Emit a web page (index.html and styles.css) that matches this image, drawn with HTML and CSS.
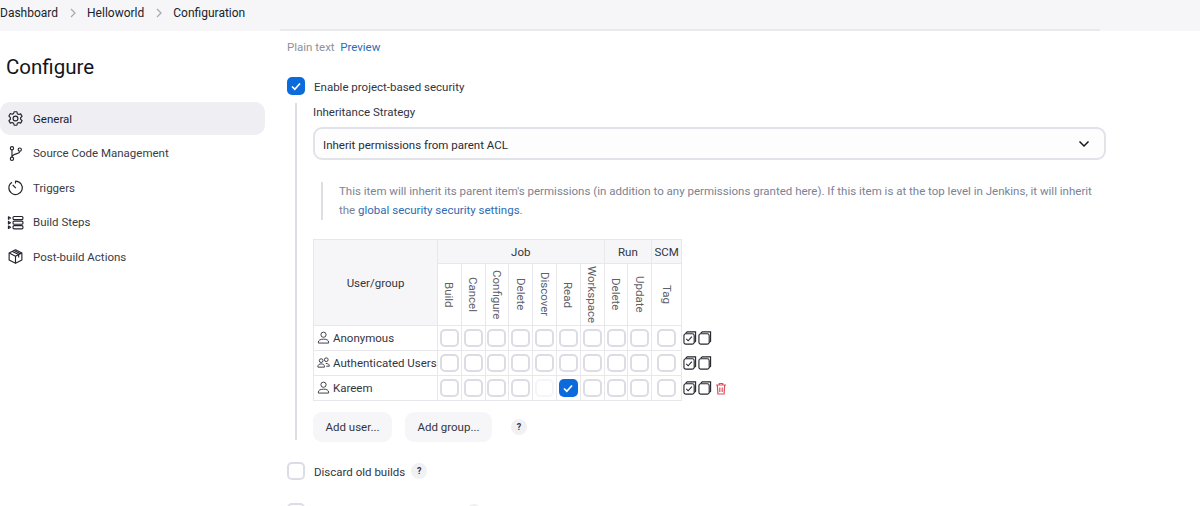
FILE: index.html
```html
<!DOCTYPE html>
<html lang="en">
  <head>
    <meta charset="UTF-8" />
    <title>Helloworld Config</title>
    <link rel="stylesheet" href="styles.css">
  </head>
  <body>
    <header class="crumbs">
      <span>Dashboard</span>
      <svg class="crumb-sep" viewBox="0 0 8 12"><path d="M2 2l4 4-4 4" /></svg>
      <span>Helloworld</span>
      <svg class="crumb-sep" viewBox="0 0 8 12"><path d="M2 2l4 4-4 4" /></svg>
      <span>Configuration</span>
    </header>

    <div class="page">
      <aside class="sidebar">
        <h1>Configure</h1>
        <nav class="side-nav">
          <a class="side-item active">
            <svg class="side-icon" viewBox="0 0 24 24"><path d="M10 2.500h4l.6 2.800 2 1.100 2.700-.9 2 3.500-2.100 1.900v2.200l2.100 1.900-2 3.500-2.700-.9-2 1.100-.6 2.800h-4l-.6-2.800-2-1.100-2.700.9-2-3.500 2.100-1.900v-2.200L2.700 8.500l2-3.500 2.700.9 2-1.100z" /><circle cx="12" cy="12" r="3.400" /></svg>
            General
          </a>
          <a class="side-item">
            <svg class="side-icon" viewBox="0 0 24 24"><circle cx="7" cy="4.500" r="2.300" /><circle cx="7" cy="19.500" r="2.300" /><circle cx="18" cy="6.500" r="2.300" /><path d="M7 7v10M18 9c0 4-11 3-11 8" /></svg>
            Source Code Management
          </a>
          <a class="side-item">
            <svg class="side-icon" viewBox="0 0 24 24"><path d="M7 4.500A9.500 9.500 0 1 0 12 3v3.500" /><path d="M8 8.500l4.500 4.500" /></svg>
            Triggers
          </a>
          <a class="side-item">
            <svg class="side-icon" viewBox="0 0 24 24"><path d="M2 4l3 1.800L2 7.500zM2 10.500l3 1.800-3 1.700zM2 17l3 1.800-3 1.700z" /><rect x="8.500" y="3.500" width="14" height="4.500" rx="1.500" /><rect x="8.500" y="10" width="14" height="4.500" rx="1.500" /><rect x="8.500" y="16.500" width="14" height="4.500" rx="1.500" /></svg>
            Build Steps
          </a>
          <a class="side-item">
            <svg class="side-icon" viewBox="0 0 24 24"><path d="M12 2.500l9 4.500v10l-9 4.500-9-4.500V7z" /><path d="M3 7l9 4.500L21 7M12 11.500v10M7.500 4.800l9 4.500v4M10 3.500l9 4.500" /></svg>
            Post-build Actions
          </a>
        </nav>
      </aside>

      <main class="content">
        <div class="desc-tabs">
          <span>Plain text</span>
          <a class="link">Preview</a>
        </div>

        <label class="check-row first">
          <span class="box checked"><svg viewBox="0 0 18 18"><path d="M5 9.500l2.800 2.700L13 6.500" /></svg></span>
          Enable project-based security
        </label>

        <section class="nested">
          <div class="field-label">Inheritance Strategy</div>
          <div class="select">
            Inherit permissions from parent ACL
            <svg viewBox="0 0 12 8"><path d="M1.500 1.500L6 6l4.500-4.500" /></svg>
          </div>

          <p class="note">
            This item will inherit its parent item's permissions (in addition to any permissions granted here). If this item is at the top level in Jenkins, it will inherit the <a class="link">global security security settings</a>.
          </p>

          <table class="matrix">
            <colgroup>
              <col class="col-user" />
              <col class="col-perm" span="9" />
              <col class="col-scm" />
              <col class="col-tools" />
            </colgroup>
            <thead>
              <tr class="head-groups">
                <th rowspan="2">User/group</th>
                <th colspan="7">Job</th>
                <th colspan="2">Run</th>
                <th>SCM</th>
              </tr>
              <tr class="head-perms">
                <th><span>Build</span></th>
                <th><span>Cancel</span></th>
                <th><span>Configure</span></th>
                <th><span>Delete</span></th>
                <th><span>Discover</span></th>
                <th><span>Read</span></th>
                <th><span>Workspace</span></th>
                <th><span>Delete</span></th>
                <th><span>Update</span></th>
                <th><span>Tag</span></th>
              </tr>
            </thead>
            <tbody id="matrix-rows"></tbody>
          </table>

          <div class="actions">
            <button class="btn add-user">Add user...</button>
            <button class="btn add-group">Add group...</button>
            <span class="help">?</span>
          </div>
        </section>

        <label class="check-row discard">
          <span class="box"></span>
          Discard old builds
          <span class="help small">?</span>
        </label>

        <div class="check-row cut">
          <span class="box"></span>
          <span class="help small far">?</span>
        </div>
      </main>
    </div>

    <script src="matrix.js"></script>
  </body>
</html>
```

FILE: matrix.js
```js
const rows = [
  { name: "Anonymous", group: false, checked: -1, remove: false },
  { name: "Authenticated Users", group: true, checked: -1, remove: false },
  { name: "Kareem", group: false, checked: 5, faint: 4, remove: true },
];

const userIcon = '<svg class="user-icon" viewBox="0 0 14 14"><circle cx="7" cy="4" r="2.800" /><path d="M1.500 13v-1c0-2 2-3.200 5.500-3.200s5.500 1.200 5.500 3.200v1z" /></svg>';
const groupIcon = '<svg class="user-icon" viewBox="0 0 14 14"><circle cx="4.500" cy="5" r="2" /><circle cx="10" cy="4" r="2" /><path d="M1 12v-1c0-1.500 1.500-2.500 3.500-2.500S8 9.500 8 11v1zM9.500 8c2.200 0 3.800 1 3.800 2.500V11H10" /></svg>';
const allIcon = '<svg class="bulk" viewBox="0 0 15 15"><path class="back" d="M3 3V2.500L4.500 1h9v10l-1.500 1.500" /><rect x="1" y="3" width="11" height="11" rx="2" /><path d="M3.500 8.500l2 2 4-4.500" /></svg>';
const noneIcon = '<svg class="bulk" viewBox="0 0 15 15"><path class="back" d="M3 3V2.500L4.500 1h9v10l-1.500 1.500" /><rect x="1" y="3" width="11" height="11" rx="2" /></svg>';
const trashIcon = '<svg class="trash" viewBox="0 0 12 13"><path d="M1 3h10M4.300 3V1.500h3.400V3M2.300 3l.6 9h6.200l.6-9M4.800 5.500v4.500M7.200 5.500v4.500" /></svg>';

const tbody = document.getElementById("matrix-rows");

rows.forEach((row) => {
  let cells = "";
  for (let i = 0; i < 10; i++) {
    let cls = "box";
    let mark = "";
    if (i === row.checked) {
      cls += " checked";
      mark = '<svg viewBox="0 0 18 18"><path d="M5 9.500l2.800 2.700L13 6.500" /></svg>';
    }
    if (i === row.faint) cls += " faint";
    cells += `<td><span class="${cls}">${mark}</span></td>`;
  }
  const tr = document.createElement("tr");
  tr.innerHTML =
    `<td class="user-cell">${row.group ? groupIcon : userIcon}${row.name}</td>` +
    cells +
    `<td class="row-tools">${allIcon}${noneIcon}${row.remove ? trashIcon : ""}</td>`;
  tbody.appendChild(tr);
});
```

FILE: styles.css
```css
* {
  box-sizing: border-box;
}
html,
body {
  margin: 0;
  height: 506px;
  overflow: hidden;
}
body {
  font-family: Roboto, "Noto Sans", sans-serif;
  font-size: 11.5px;
  color: #33353f;
  background-color: #fff;
}
.crumbs {
  height: 31px;
  padding-bottom: 6px;
  display: flex;
  align-items: center;
  gap: 10.5px;
  font-size: 12px;
  color: #20222b;
  background-color: #f6f6f8;
}
.crumb-sep {
  width: 8px;
  height: 12px;
  fill: none;
  stroke: #a6a8b1;
  stroke-width: 1.2;
}
.page {
  display: flex;
}
.sidebar {
  width: 287px;
  flex: none;
  padding-right: 22px;
}
.sidebar h1 {
  margin: 22px 0 21px 6px;
  font-size: 20.5px;
  line-height: 28px;
  font-weight: 400;
  color: #14151a;
}
.side-nav {
  display: flex;
  flex-direction: column;
  gap: 1.5px;
}
.side-item {
  height: 33px;
  display: flex;
  align-items: center;
  gap: 9px;
  padding-left: 7px;
  border-radius: 10px;
  color: #3a3c46;
}
.side-item.active {
  background-color: #eeeef3;
  color: #20222b;
}
.side-icon {
  width: 17px;
  height: 17px;
  fill: none;
  stroke: #23252e;
  stroke-width: 1.6;
  stroke-linejoin: round;
}
.content {
  flex: none;
  width: 820px;
  position: relative;
}
.content::before {
  content: "";
  position: absolute;
  top: -2px;
  left: -7px;
  width: 820px;
  height: 2px;
  background-color: #e9e9ee;
}
.desc-tabs {
  display: flex;
  gap: 5.5px;
  height: 18px;
  margin-top: 7px;
  line-height: 18px;
  color: #8d919e;
}
.link {
  color: #2b6cb5;
}
.check-row {
  display: flex;
  align-items: flex-start;
  gap: 9px;
  height: 18px;
  line-height: 20px;
  color: #33353f;
}
.check-row.first {
  margin-top: 21px;
}
.box {
  display: inline-block;
  width: 18px;
  height: 18px;
  flex: none;
  border: 2px solid #dcdde4;
  border-radius: 5px;
  background-color: #fff;
}
.box.checked {
  border: none;
  background-color: #0b6bdc;
}
.box.faint {
  border-color: #f5f5f7;
}
.box svg {
  display: block;
  width: 18px;
  height: 18px;
  fill: none;
  stroke: #fff;
  stroke-width: 1.7;
}
.nested {
  margin: 8px 0 0 8px;
  width: 812px;
  height: 337px;
  padding-left: 16px;
  border-left: 2px solid #dddee4;
}
.field-label {
  line-height: 18px;
  color: #33353f;
}
.select {
  width: 793px;
  height: 33px;
  margin-top: 6px;
  padding: 2px 14px 0 8px;
  display: flex;
  align-items: center;
  justify-content: space-between;
  border: 2px solid #e2e3e9;
  border-radius: 9px;
  background-color: #fdfdfe;
  color: #2a2c35;
}
.select svg {
  width: 12px;
  height: 8px;
  margin-top: -2px;
  fill: none;
  stroke: #15161c;
  stroke-width: 1.5;
}
.note {
  width: 775px;
  margin: 22px 0 0 8px;
  padding-left: 16px;
  border-left: 2px solid #dddee4;
  line-height: 19px;
  color: #7c8294;
}
.matrix {
  margin-top: 19px;
  width: 428px;
  table-layout: fixed;
  border-collapse: collapse;
}
.col-user {
  width: 124px;
}
.col-perm {
  width: 23.8px;
}
.col-scm {
  width: 30px;
}
.col-tools {
  width: 60px;
}
.matrix th,
.matrix td {
  border: 1px solid #e8e8ec;
  padding: 0;
  text-align: center;
  font-weight: 400;
}
.head-groups th {
  height: 24px;
  background-color: #f6f6f8;
  color: #33353f;
}
.head-perms th {
  height: 62px;
  color: #5e606a;
}
.head-perms span {
  display: block;
  width: fit-content;
  margin: 0 auto;
  writing-mode: vertical-rl;
  line-height: 14px;
}
.matrix td {
  height: 25px;
}
.matrix .box {
  display: block;
  width: 19px;
  margin: 0 auto;
}
.matrix td.user-cell {
  padding-left: 3px;
  text-align: left;
  white-space: nowrap;
  color: #33353f;
}
.user-icon {
  width: 13px;
  height: 13px;
  margin-right: 3px;
  vertical-align: -2px;
  fill: none;
  stroke: #33353f;
  stroke-width: 1;
}
.matrix td.row-tools {
  border: none;
  padding-left: 1px;
  text-align: left;
  white-space: nowrap;
}
.bulk {
  width: 14px;
  height: 14px;
  margin-right: 1px;
  vertical-align: middle;
  fill: #fff;
  stroke: #25262d;
  stroke-width: 1.2;
}
.bulk .back {
  fill: none;
}
.trash {
  width: 12px;
  height: 13px;
  margin-left: 2px;
  vertical-align: middle;
  fill: none;
  stroke: #dc4f60;
  stroke-width: 1.2;
}
.actions {
  margin-top: 11px;
  display: flex;
  align-items: center;
}
.btn {
  height: 30px;
  border: none;
  border-radius: 9px;
  background-color: #f6f6f8;
  color: #33353f;
  font: inherit;
  padding: 0;
}
.add-user {
  width: 79px;
}
.add-group {
  width: 87px;
  margin-left: 13px;
}
.help {
  width: 16px;
  height: 16px;
  margin-left: 19px;
  display: inline-flex;
  align-items: center;
  justify-content: center;
  border-radius: 50%;
  background-color: #f1f1f4;
  color: #33353f;
  font-size: 9px;
  font-weight: 700;
  line-height: 16px;
}
.help.small {
  margin-left: -3px;
  margin-top: 1px;
}
.check-row.discard {
  margin-top: 22px;
}
.check-row.cut {
  margin-top: 23px;
}
.help.far {
  margin-left: 152px;
}
```
